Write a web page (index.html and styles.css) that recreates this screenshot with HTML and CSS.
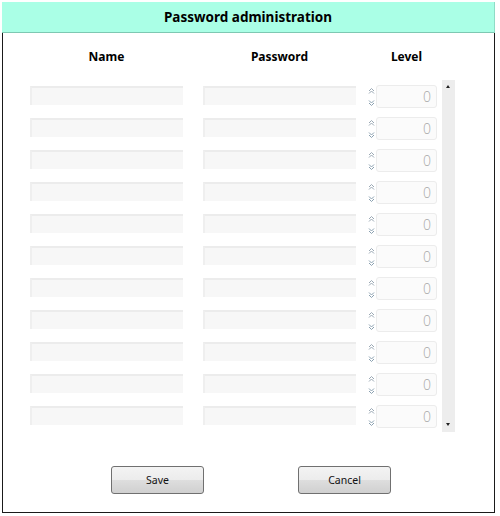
FILE: index.html
```html
<!DOCTYPE html>
<html>
<head>
<meta charset="utf-8">
<link rel="stylesheet" href="styles.css">
</head>
<body>
<div class="window">
  <div class="titlebar">Password administration</div>
  <div class="panel">
    <div class="heads">
      <div class="h-name">Name</div>
      <div class="h-pass">Password</div>
      <div class="h-level">Level</div>
    </div>
    <div class="list">
      <div class="rows" id="rows"></div>
      <div class="scrollbar">
        <span class="sb-up"></span>
        <span class="sb-down"></span>
      </div>
    </div>
    <div class="buttons">
      <button class="btn">Save</button>
      <button class="btn">Cancel</button>
    </div>
  </div>
</div>
<template id="rowtpl">
  <div class="row">
    <div class="field"></div>
    <div class="field pass"></div>
    <div class="spin">
      <svg width="7" height="20" viewBox="0 0 7 20"><path d="M1 4 L3.5 1.5 L6 4 M1 6.5 L3.5 4 L6 6.5" fill="none" stroke="#9aa8b4" stroke-width="1"/><path d="M1 13.5 L3.5 16 L6 13.5 M1 16 L3.5 18.5 L6 16" fill="none" stroke="#8aa0b0" stroke-width="1"/></svg>
    </div>
    <div class="level">0</div>
  </div>
</template>
<script>
  var tpl = document.getElementById('rowtpl');
  var rows = document.getElementById('rows');
  for (var i = 0; i < 11; i++) rows.appendChild(tpl.content.cloneNode(true));
</script>
</body>
</html>
```
FILE: styles.css
```css
html, body { margin: 0; padding: 0; background: #fff; }
body { font-family: "Noto Sans", "Open Sans", sans-serif; color: #000; }
.window { margin: 2px 0 0 2px; width: 493px; }
.titlebar {
  height: 30px; line-height: 30px; text-align: center;
  background: #aaffe6; border-bottom: 1px solid #7ec8b2; border-right: 1px solid #8fdcc6;
  font-weight: bold; font-size: 13.5px;
}
.panel {
  border: 1px solid #1a1a1a; border-top: none; height: 480px;
  box-sizing: border-box;
}
.heads { display: flex; height: 47px; align-items: center; padding-left: 27px; font-weight: bold; font-size: 12px; }
.h-name { width: 153px; text-align: center; }
.h-pass { width: 153px; margin-left: 20px; text-align: center; }
.h-level { width: 61px; margin-left: 20px; text-align: center; }
.list { display: flex; padding-left: 27px; }
.rows { display: flex; flex-direction: column; }
.row { display: flex; height: 32px; align-items: flex-start; padding-top: 7px; box-sizing: border-box; }
.field {
  width: 153px; height: 19px; margin-top: -1px; box-sizing: border-box;
  background: #f7f7f7; border-top: 2px solid #ececec; border-left: 2px solid #efefef;
}
.pass { margin-left: 20px; }
.spin { width: 7px; height: 20px; margin-left: 12px; }
.spin svg { display: block; }
.level {
  width: 61px; height: 23px; margin-left: 1px; margin-top: -2px; box-sizing: border-box;
  border: 1px solid #ececec; border-radius: 3px; background: #fbfbfb;
  text-align: right; padding-right: 5px; font-size: 14px; line-height: 21px; color: #a8a8a8;
  font-family: "Open Sans", sans-serif; font-weight: 300;
}
.scrollbar {
  position: relative; width: 13px; height: 352px; margin-left: 5px;
  background: #ededed;
}
.sb-up, .sb-down { position: absolute; left: 4px; width: 0; height: 0; border-left: 2.5px solid transparent; border-right: 2.5px solid transparent; }
.sb-up { top: 5px; border-bottom: 3px solid #222; }
.sb-down { bottom: 6px; border-top: 3px solid #222; }
.buttons { display: flex; padding-left: 108px; margin-top: 34px; gap: 94px; }
.btn {
  width: 93px; height: 28px; border: 1px solid #707070; border-radius: 3px;
  background: linear-gradient(#f3f3f3, #ececec 50%, #dedede 50%, #d0d0d0);
  font-family: "Noto Sans", sans-serif; font-size: 10.5px; color: #111; padding: 0;
}
```
